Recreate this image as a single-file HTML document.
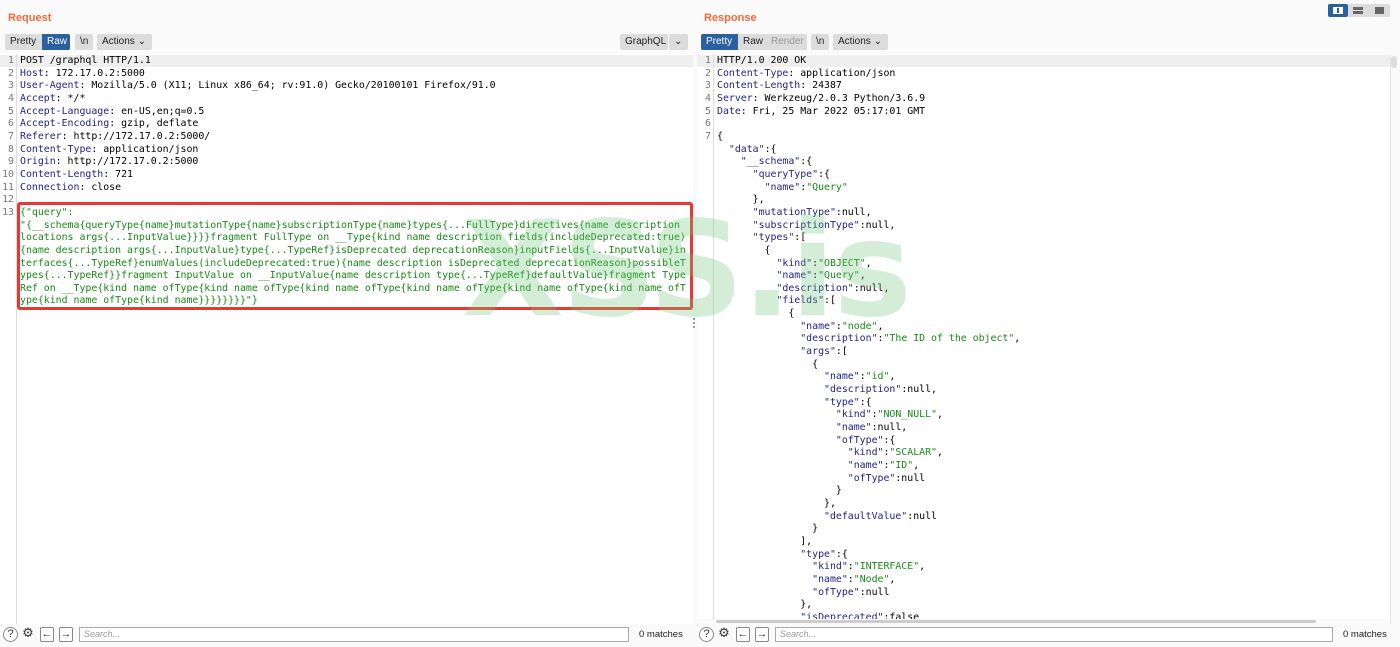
<!DOCTYPE html>
<html><head><meta charset="utf-8"><style>
*{box-sizing:border-box;margin:0;padding:0}
body{width:1400px;height:647px;background:#fafafa;font-family:"Liberation Sans","DejaVu Sans",sans-serif;position:relative;overflow:hidden}
.title{position:absolute;top:12px;color:#f26a3c;font-weight:bold;font-size:11px}
.btn{position:absolute;height:16px;background:#dcdcdc;border-radius:2px;font-size:10px;color:#222;line-height:16px;padding:0 5px}
.sel{background:#2a5fa0;color:#fff}
.ed{position:absolute;top:54px;background:#fff;font-family:"DejaVu Sans Mono","Liberation Mono",monospace;font-size:9.9px;line-height:12.65px;white-space:pre}
.gut{position:absolute;left:0;top:0;padding-top:1px;width:17px;text-align:right;color:#777;border-right:1px solid #ddd;height:100%;padding-right:2px}
.code{position:absolute;left:20px;top:1px}
.k{color:#22238a}.s{color:#178a17}.g{color:#178a17}
.hl{position:absolute;left:0;top:1px;height:12px;background:#efefef}
.ic{position:absolute;width:14px;height:15px;border:1px solid #888;border-radius:2px;font-size:11px;line-height:12px;text-align:center;background:#fff;color:#333}
.search{position:absolute;height:15px;border:1px solid #aaa;background:#fff;font-size:9px;font-style:italic;color:#999;padding-left:4px;line-height:13px}
.m{position:absolute;font-size:9.5px;color:#222;line-height:15px}
</style></head><body>
<div class="title" style="left:8px">Request</div>
<div class="title" style="left:704px">Response</div>

<div class="btn" style="left:5px;top:34px;width:37px;border-radius:2px 0 0 2px">Pretty</div>
<div class="btn sel" style="left:42px;top:34px;width:28px;border-radius:0 2px 2px 0">Raw</div>
<div class="btn" style="left:75px;top:34px;width:18px">\n</div>
<div class="btn" style="left:97px;top:34px;width:55px">Actions ⌄</div>
<div class="btn" style="left:620px;top:34px;width:48px">GraphQL</div>
<div class="btn" style="left:669px;top:34px;width:19px">⌄</div>

<div class="btn sel" style="left:701px;top:34px;width:37px;border-radius:2px 0 0 2px">Pretty</div>
<div class="btn" style="left:738px;top:34px;width:28px;border-radius:0">Raw</div>
<div class="btn" style="left:766px;top:34px;width:41px;color:#999;border-radius:0 2px 2px 0">Render</div>
<div class="btn" style="left:811px;top:34px;width:18px">\n</div>
<div class="btn" style="left:833px;top:34px;width:55px">Actions ⌄</div>

<div class="btn sel" style="left:1328px;top:4px;width:20px;height:13px"></div>
<div class="btn" style="left:1348px;top:4px;width:21px;height:13px;border-radius:0"></div>
<div class="btn" style="left:1369px;top:4px;width:21px;height:13px"></div>
<div style="position:absolute;left:1333px;top:7px;width:10px;height:7px;border:1px solid #fff;background:#fff"><div style="margin-left:3px;width:2px;height:5px;background:#2a5fa0"></div></div>
<div style="position:absolute;left:1353px;top:7px;width:10px;height:3px;background:#666"></div>
<div style="position:absolute;left:1353px;top:11px;width:10px;height:3px;background:#666"></div>
<div style="position:absolute;left:1375px;top:7px;width:9px;height:7px;background:#666"></div>

<div class="ed" style="left:0;width:693px;height:570px">
<div class="hl" style="width:693px"></div>
<div class="gut">1
2
3
4
5
6
7
8
9
10
11
12
13</div>
<div class="code">POST /graphql HTTP/1.1
<span class="k">Host</span>: 172.17.0.2:5000
<span class="k">User-Agent</span>: Mozilla/5.0 (X11; Linux x86_64; rv:91.0) Gecko/20100101 Firefox/91.0
<span class="k">Accept</span>: */*
<span class="k">Accept-Language</span>: en-US,en;q=0.5
<span class="k">Accept-Encoding</span>: gzip, deflate
<span class="k">Referer</span>: http://172.17.0.2:5000/
<span class="k">Content-Type</span>: application/json
<span class="k">Origin</span>: http://172.17.0.2:5000
<span class="k">Content-Length</span>: 721
<span class="k">Connection</span>: close

<span class="g">{"query":
"{__schema{queryType{name}mutationType{name}subscriptionType{name}types{...FullType}directives{name description
locations args{...InputValue}}}}fragment FullType on __Type{kind name description fields(includeDeprecated:true)
{name description args{...InputValue}type{...TypeRef}isDeprecated deprecationReason}inputFields{...InputValue}in
terfaces{...TypeRef}enumValues(includeDeprecated:true){name description isDeprecated deprecationReason}possibleT
ypes{...TypeRef}}fragment InputValue on __InputValue{name description type{...TypeRef}defaultValue}fragment Type
Ref on __Type{kind name ofType{kind name ofType{kind name ofType{kind name ofType{kind name ofType{kind name ofT
ype{kind name ofType{kind name}}}}}}}}"}</span></div>
</div>
<div style="position:absolute;left:17px;top:202px;width:676px;height:108px;border:3px solid #e53935;border-radius:3px"></div>
<div style="position:absolute;left:693px;top:318px;width:2px;height:10px;border-left:2px dotted #999"></div>

<div class="ed" style="left:697px;width:693px;height:565px">
<div class="hl" style="width:693px"></div>
<div class="gut">1
2
3
4
5
6
7</div>
<div class="code">HTTP/1.0 200 OK
<span class="k">Content-Type</span>: application/json
<span class="k">Content-Length</span>: 24387
<span class="k">Server</span>: Werkzeug/2.0.3 Python/3.6.9
<span class="k">Date</span>: Fri, 25 Mar 2022 05:17:01 GMT

{
  <span class="k">"data"</span>:{
    <span class="k">"__schema"</span>:{
      <span class="k">"queryType"</span>:{
        <span class="k">"name"</span>:<span class="s">"Query"</span>
      },
      <span class="k">"mutationType"</span>:null,
      <span class="k">"subscriptionType"</span>:null,
      <span class="k">"types"</span>:[
        {
          <span class="k">"kind"</span>:<span class="s">"OBJECT"</span>,
          <span class="k">"name"</span>:<span class="s">"Query"</span>,
          <span class="k">"description"</span>:null,
          <span class="k">"fields"</span>:[
            {
              <span class="k">"name"</span>:<span class="s">"node"</span>,
              <span class="k">"description"</span>:<span class="s">"The ID of the object"</span>,
              <span class="k">"args"</span>:[
                {
                  <span class="k">"name"</span>:<span class="s">"id"</span>,
                  <span class="k">"description"</span>:null,
                  <span class="k">"type"</span>:{
                    <span class="k">"kind"</span>:<span class="s">"NON_NULL"</span>,
                    <span class="k">"name"</span>:null,
                    <span class="k">"ofType"</span>:{
                      <span class="k">"kind"</span>:<span class="s">"SCALAR"</span>,
                      <span class="k">"name"</span>:<span class="s">"ID"</span>,
                      <span class="k">"ofType"</span>:null
                    }
                  },
                  <span class="k">"defaultValue"</span>:null
                }
              ],
              <span class="k">"type"</span>:{
                <span class="k">"kind"</span>:<span class="s">"INTERFACE"</span>,
                <span class="k">"name"</span>:<span class="s">"Node"</span>,
                <span class="k">"ofType"</span>:null
              },
              <span class="k">"isDeprecated"</span>:false</div>
</div>
<div style="position:absolute;left:716px;top:619px;width:674px;height:4px;background:#fafafa"></div>
<div style="position:absolute;left:716px;top:620px;width:600px;height:3px;background:#ccc;border-radius:2px"></div>
<div style="position:absolute;left:1390px;top:54px;width:10px;height:570px;background:#fafafa;border-left:1px solid #e5e5e5"></div>
<div style="position:absolute;left:1391px;top:56px;width:6px;height:12px;background:#ddd;border-radius:3px"></div>

<div style="position:absolute;left:462px;top:200px;font-family:'DejaVu Sans','Liberation Sans',sans-serif;font-weight:bold;font-size:132px;line-height:140px;color:rgba(110,195,120,0.3);letter-spacing:-2px;white-space:nowrap">XSS.is</div>

<div class="ic" style="left:3px;top:627px;border-radius:50%;width:15px">?</div>
<div class="ic" style="left:21px;top:627px;border:none;font-size:13px;background:none">⚙</div>
<div class="ic" style="left:40px;top:627px">←</div>
<div class="ic" style="left:59px;top:627px">→</div>
<div class="search" style="left:79px;top:627px;width:550px">Search...</div>
<div class="m" style="left:639px;top:627px">0 matches</div>
<div class="ic" style="left:699px;top:627px;border-radius:50%;width:15px">?</div>
<div class="ic" style="left:717px;top:627px;border:none;font-size:13px;background:none">⚙</div>
<div class="ic" style="left:736px;top:627px">←</div>
<div class="ic" style="left:755px;top:627px">→</div>
<div class="search" style="left:775px;top:627px;width:558px">Search...</div>
<div class="m" style="left:1343px;top:627px">0 matches</div>
</body></html>
